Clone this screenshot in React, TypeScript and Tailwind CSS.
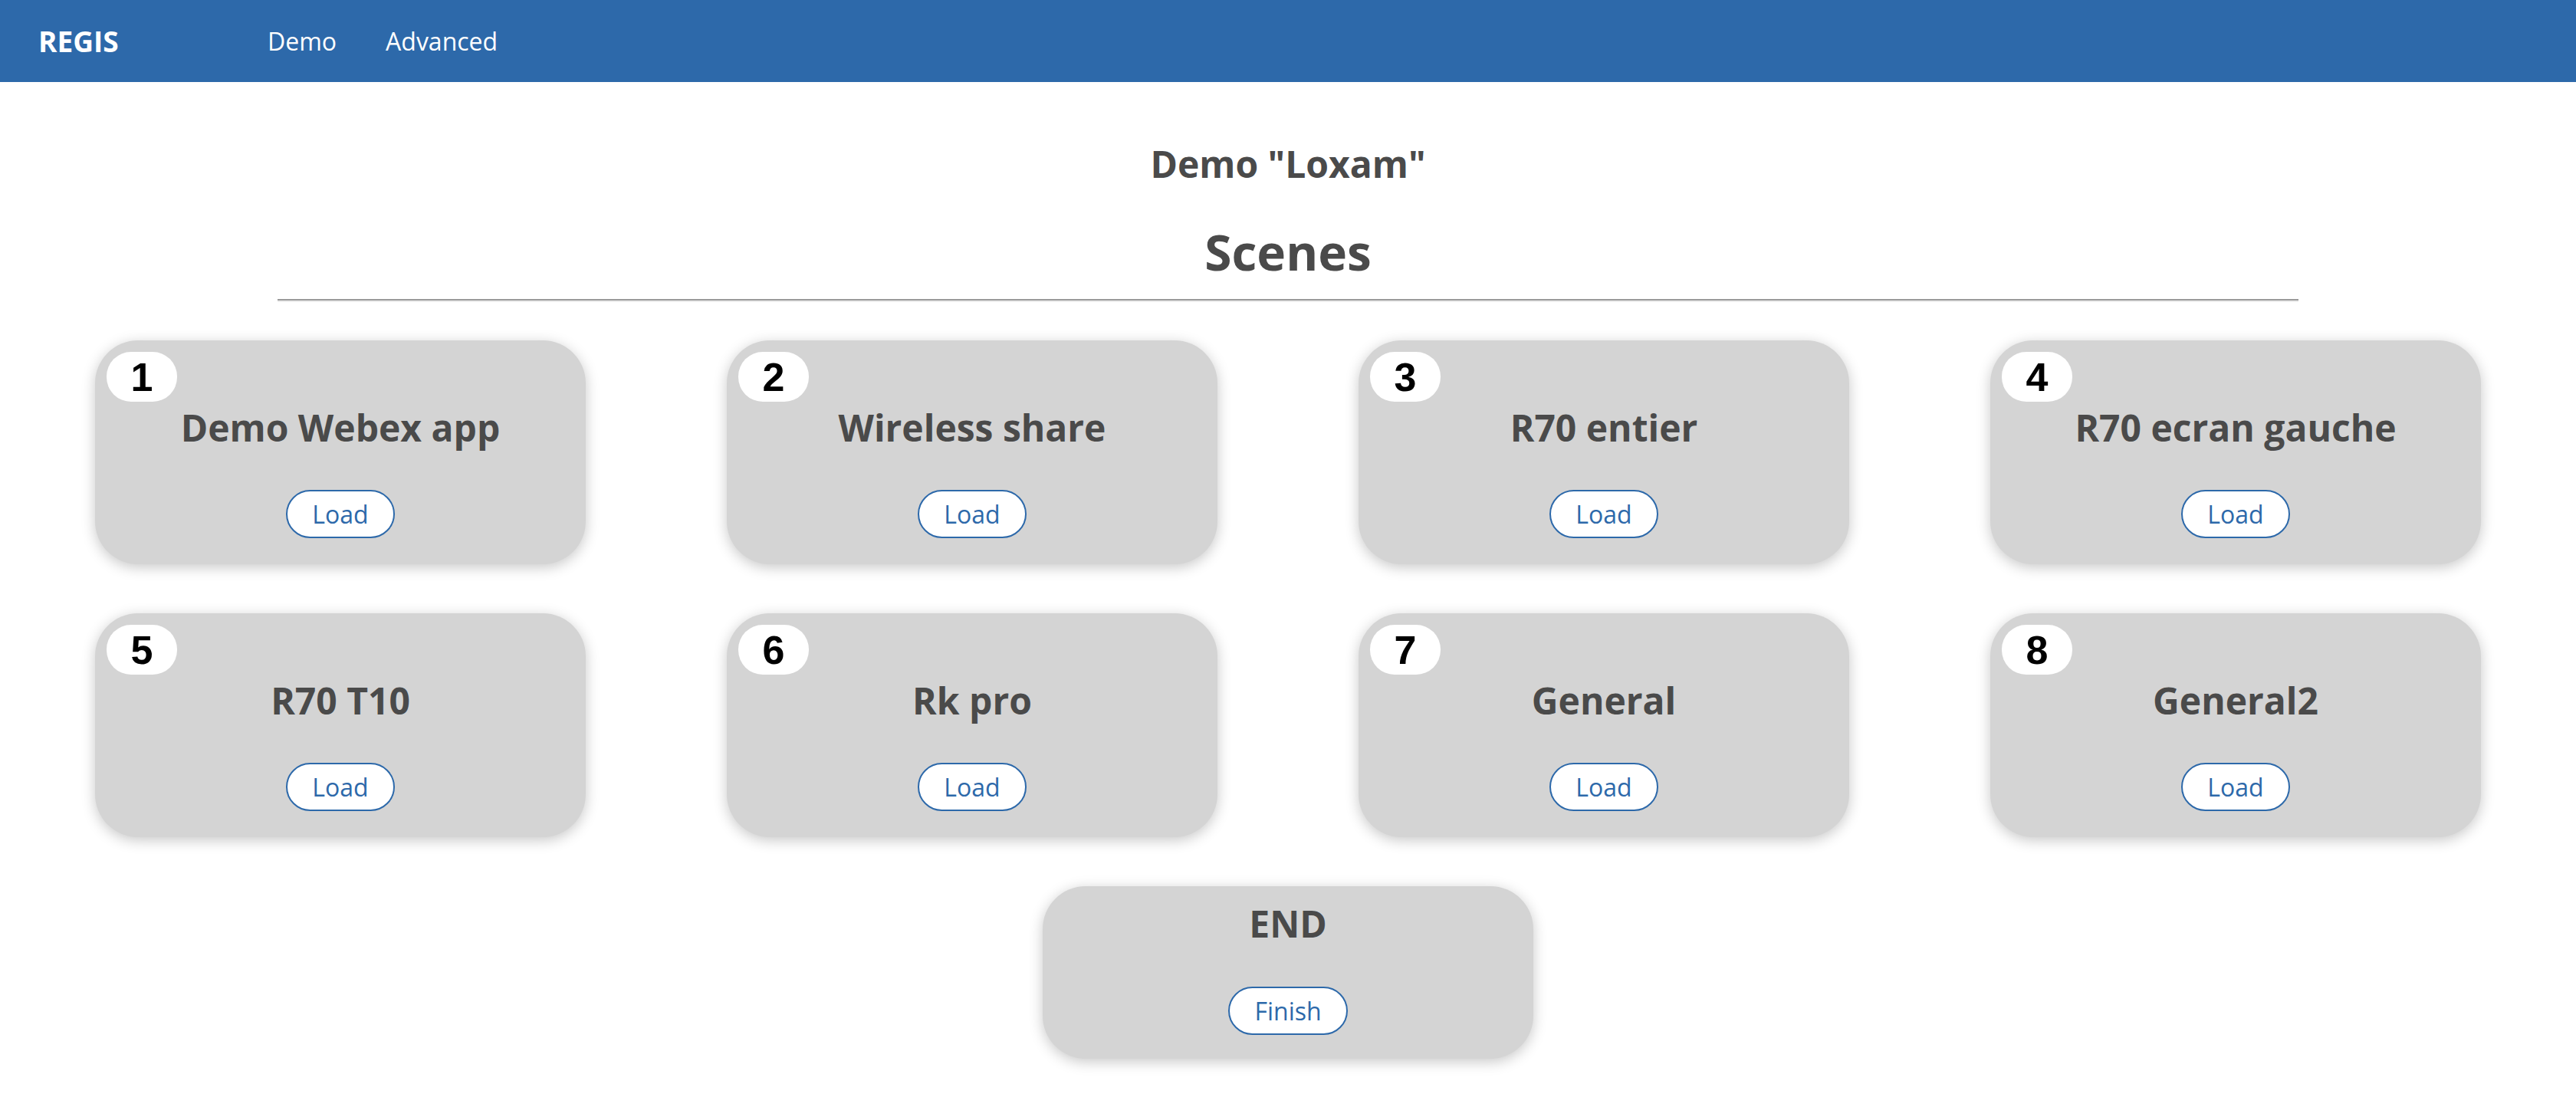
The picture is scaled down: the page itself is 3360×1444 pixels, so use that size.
import React from "react";

const scenes = [
  { n: 1, title: "Demo Webex app" },
  { n: 2, title: "Wireless share" },
  { n: 3, title: "R70 entier" },
  { n: 4, title: "R70 ecran gauche" },
  { n: 5, title: "R70 T10" },
  { n: 6, title: "Rk pro" },
  { n: 7, title: "General" },
  { n: 8, title: "General2" },
];

const font = { fontFamily: '"Open Sans", "Liberation Sans", sans-serif' };

function Btn({ label }: { label: string }) {
  return (
    <button className="h-[63px] rounded-full border-2 border-[#2d69aa] bg-white px-[32px] text-[32px] leading-none text-[#2d69aa]">
      {label}
    </button>
  );
}

function Card({ n, title }: { n: number; title: string }) {
  return (
    <div className="mx-auto flex w-[640px] flex-col rounded-[56px] bg-[#d4d4d4] pt-[15px] pb-[34px] shadow-[0_4px_18px_rgba(0,0,0,0.22)]">
      <div
        className="ml-[15px] flex h-[65px] w-[92px] items-center justify-center rounded-[32px] bg-white text-[52px] font-bold leading-none text-black"
        style={{ fontFamily: '"Liberation Sans", Arial, sans-serif' }}
      >
        {n}
      </div>
      <div className="mt-[5px] text-center text-[48px] font-bold leading-[58px] text-[#4a4a4a]">
        {title}
      </div>
      <div className="mt-[52px] flex justify-center">
        <Btn label="Load" />
      </div>
    </div>
  );
}

export default function App() {
  return (
    <div className="min-h-[1444px] w-full bg-white" style={font}>
      <nav className="flex h-[107px] items-center bg-[#2d69aa] pl-[50px] text-white">
        <span className="w-[267px] text-[37px] font-bold">REGIS</span>
        <a className="px-[32px] text-[32px]">Demo</a>
        <a className="px-[32px] text-[32px]">Advanced</a>
      </nav>
      <main className="flex flex-col items-center">
        <h4 className="mt-[78px] text-[48px] font-bold leading-[58px] text-[#4a4a4a]">
          Demo "Loxam"
        </h4>
        <h2 className="mt-[47px] text-[64px] font-bold leading-[77px] text-[#4a4a4a]">
          Scenes
        </h2>
      </main>
      <div className="mx-[362px] mt-[23px] h-[4px] border-t-2 border-[#9a9a9a] bg-[#ececec]" />
      <div className="mt-[50px] grid grid-cols-4 gap-y-[64px] px-[32px]">
        {scenes.map((s) => (
          <Card key={s.n} n={s.n} title={s.title} />
        ))}
      </div>
      <div className="mt-[64px] flex justify-center pb-[60px]">
        <div className="flex w-[640px] flex-col rounded-[56px] bg-[#d4d4d4] pt-[20px] pb-[31px] shadow-[0_4px_18px_rgba(0,0,0,0.22)]">
          <div className="text-center text-[48px] font-bold leading-[58px] text-[#4a4a4a]">
            END
          </div>
          <div className="mt-[53px] flex justify-center">
            <Btn label="Finish" />
          </div>
        </div>
      </div>
    </div>
  );
}
